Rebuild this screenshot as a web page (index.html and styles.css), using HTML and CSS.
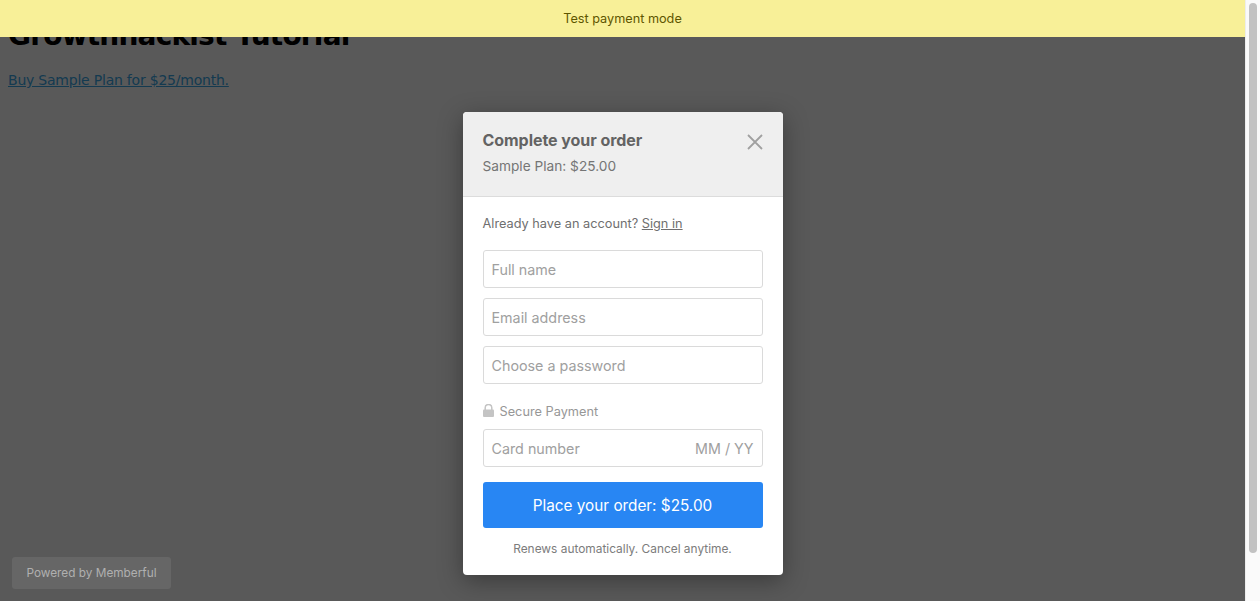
FILE: index.html
```html
<!DOCTYPE html>
<html lang="en">
<head>
  <meta charset="UTF-8">
  <title>Growthhackist Tutorial</title>
  <link rel="stylesheet" href="styles.css">
</head>
<body>
  <div class="viewport">
    <div class="page">
      <div class="page-content">
        <h1 class="page-title">Growthhackist Tutorial</h1>
        <p class="page-text"><a href="#" class="page-link">Buy Sample Plan for $25/month.</a></p>
      </div>

      <div class="overlay">
        <div class="test-banner">Test payment mode</div>

        <div class="modal">
          <div class="modal-header">
            <div class="modal-heading">
              <div class="modal-title">Complete your order</div>
              <div class="modal-plan">Sample Plan: $25.00</div>
            </div>
            <svg class="close-icon" width="16" height="16" viewBox="0 0 16 16">
              <path d="M1 1L15 15M15 1L1 15" stroke="#a0a0a0" stroke-width="1.8" fill="none"/>
            </svg>
          </div>

          <div class="modal-body">
            <div class="account-line">Already have an account? <a href="#" class="signin-link">Sign in</a></div>

            <div class="fields">
              <div class="field">Full name</div>
              <div class="field">Email address</div>
              <div class="field">Choose a password</div>
            </div>

            <div class="secure-label">
              <svg class="lock-icon" width="11" height="13" viewBox="0 0 11 13">
                <path d="M2.2 6V3.8a3.3 3.3 0 0 1 6.6 0V6" stroke="#c4c4c4" stroke-width="1.5" fill="none"/>
                <rect x="0" y="5.5" width="11" height="7.5" rx="1" fill="#c4c4c4"/>
              </svg>
              <span>Secure Payment</span>
            </div>

            <div class="field card-field">
              <span>Card number</span>
              <span>MM / YY</span>
            </div>

            <button class="order-button">Place your order: $25.00</button>

            <div class="renew-note">Renews automatically. Cancel anytime.</div>
          </div>
        </div>

        <div class="powered-by">Powered by Memberful</div>
      </div>
    </div>

    <div class="scrollbar">
      <div class="scrollbar-thumb"></div>
    </div>
  </div>
</body>
</html>
```

FILE: styles.css
```css
* {
  margin: 0;
  padding: 0;
  box-sizing: border-box;
}

html, body {
  height: 100%;
  overflow: hidden;
  background: #ffffff;
}

.viewport {
  display: flex;
  height: 100%;
}

.page {
  flex: 1;
  position: relative;
  overflow: hidden;
}

.page-content {
  padding: 18px 8px 0;
  font-family: "DejaVu Sans", sans-serif;
}

.page-title {
  font-size: 28px;
  line-height: 36px;
  font-weight: 700;
  color: #000000;
  letter-spacing: -0.8px;
}

.page-text {
  margin-top: 16px;
  font-size: 14px;
  line-height: 20px;
  letter-spacing: -0.22px;
}

.page-link {
  color: #3aa6e6;
}

.overlay {
  position: absolute;
  top: 0;
  left: 0;
  width: 100%;
  height: 100%;
  background: rgba(0, 0, 0, 0.65);
  font-family: Inter, "Noto Sans", sans-serif;
  display: flex;
  flex-direction: column;
  align-items: center;
}

.test-banner {
  width: 100%;
  height: 37px;
  background: #f8f098;
  color: #5e5600;
  font-size: 12.7px;
  line-height: 37px;
  text-align: center;
}

.modal {
  width: 320px;
  margin-top: 75px;
  background: #ffffff;
  border-radius: 4px;
  box-shadow: 0 6px 24px rgba(0, 0, 0, 0.35);
  overflow: hidden;
}

.modal-header {
  height: 85px;
  background: #efefef;
  border-bottom: 1px solid #dcdcdc;
  padding: 18px 20px 0;
  display: flex;
  justify-content: space-between;
  align-items: flex-start;
}

.modal-title {
  font-size: 16px;
  line-height: 20px;
  font-weight: 700;
  color: #636363;
  letter-spacing: -0.05px;
}

.modal-plan {
  margin-top: 7px;
  font-size: 13.7px;
  line-height: 18px;
  color: #757575;
}

.close-icon {
  margin-top: 4px;
}

.modal-body {
  padding: 18px 20px 0;
}

.account-line {
  font-size: 12.75px;
  line-height: 18px;
  color: #6f6f6f;
}

.signin-link {
  color: #6f6f6f;
}

.fields {
  margin-top: 17px;
  display: flex;
  flex-direction: column;
  gap: 10px;
}

.field {
  height: 38px;
  border: 1px solid #dadada;
  border-radius: 3px;
  padding: 0 8px;
  font-size: 14.3px;
  line-height: 38px;
  color: #a0a0a0;
}

.secure-label {
  margin-top: 19px;
  display: flex;
  align-items: center;
  gap: 6px;
  font-size: 12.75px;
  line-height: 18px;
  color: #979797;
}

.lock-icon {
  margin-top: -4px;
}

.card-field {
  margin-top: 8px;
  display: flex;
  justify-content: space-between;
}

.order-button {
  display: block;
  width: 100%;
  height: 46px;
  margin-top: 15px;
  border: none;
  border-radius: 3px;
  background: #2886f3;
  color: #ffffff;
  font-family: Inter, "Noto Sans", sans-serif;
  font-size: 15.3px;
}

.renew-note {
  margin-top: 12px;
  padding-bottom: 17px;
  font-size: 11.9px;
  line-height: 18px;
  color: #7c7c7c;
  text-align: center;
}

.powered-by {
  position: absolute;
  left: 12px;
  bottom: 12px;
  width: 159px;
  height: 32px;
  background: #666666;
  border-radius: 3px;
  color: #b0b0b0;
  font-size: 11.8px;
  line-height: 32px;
  text-align: center;
}

.scrollbar {
  width: 15px;
  height: 100%;
  background: #fafafa;
  border-left: 1px solid #ededed;
  padding: 3px 3px 0 3px;
}

.scrollbar-thumb {
  height: 550px;
  background: #c2c2c2;
  border-radius: 5px;
}
```
